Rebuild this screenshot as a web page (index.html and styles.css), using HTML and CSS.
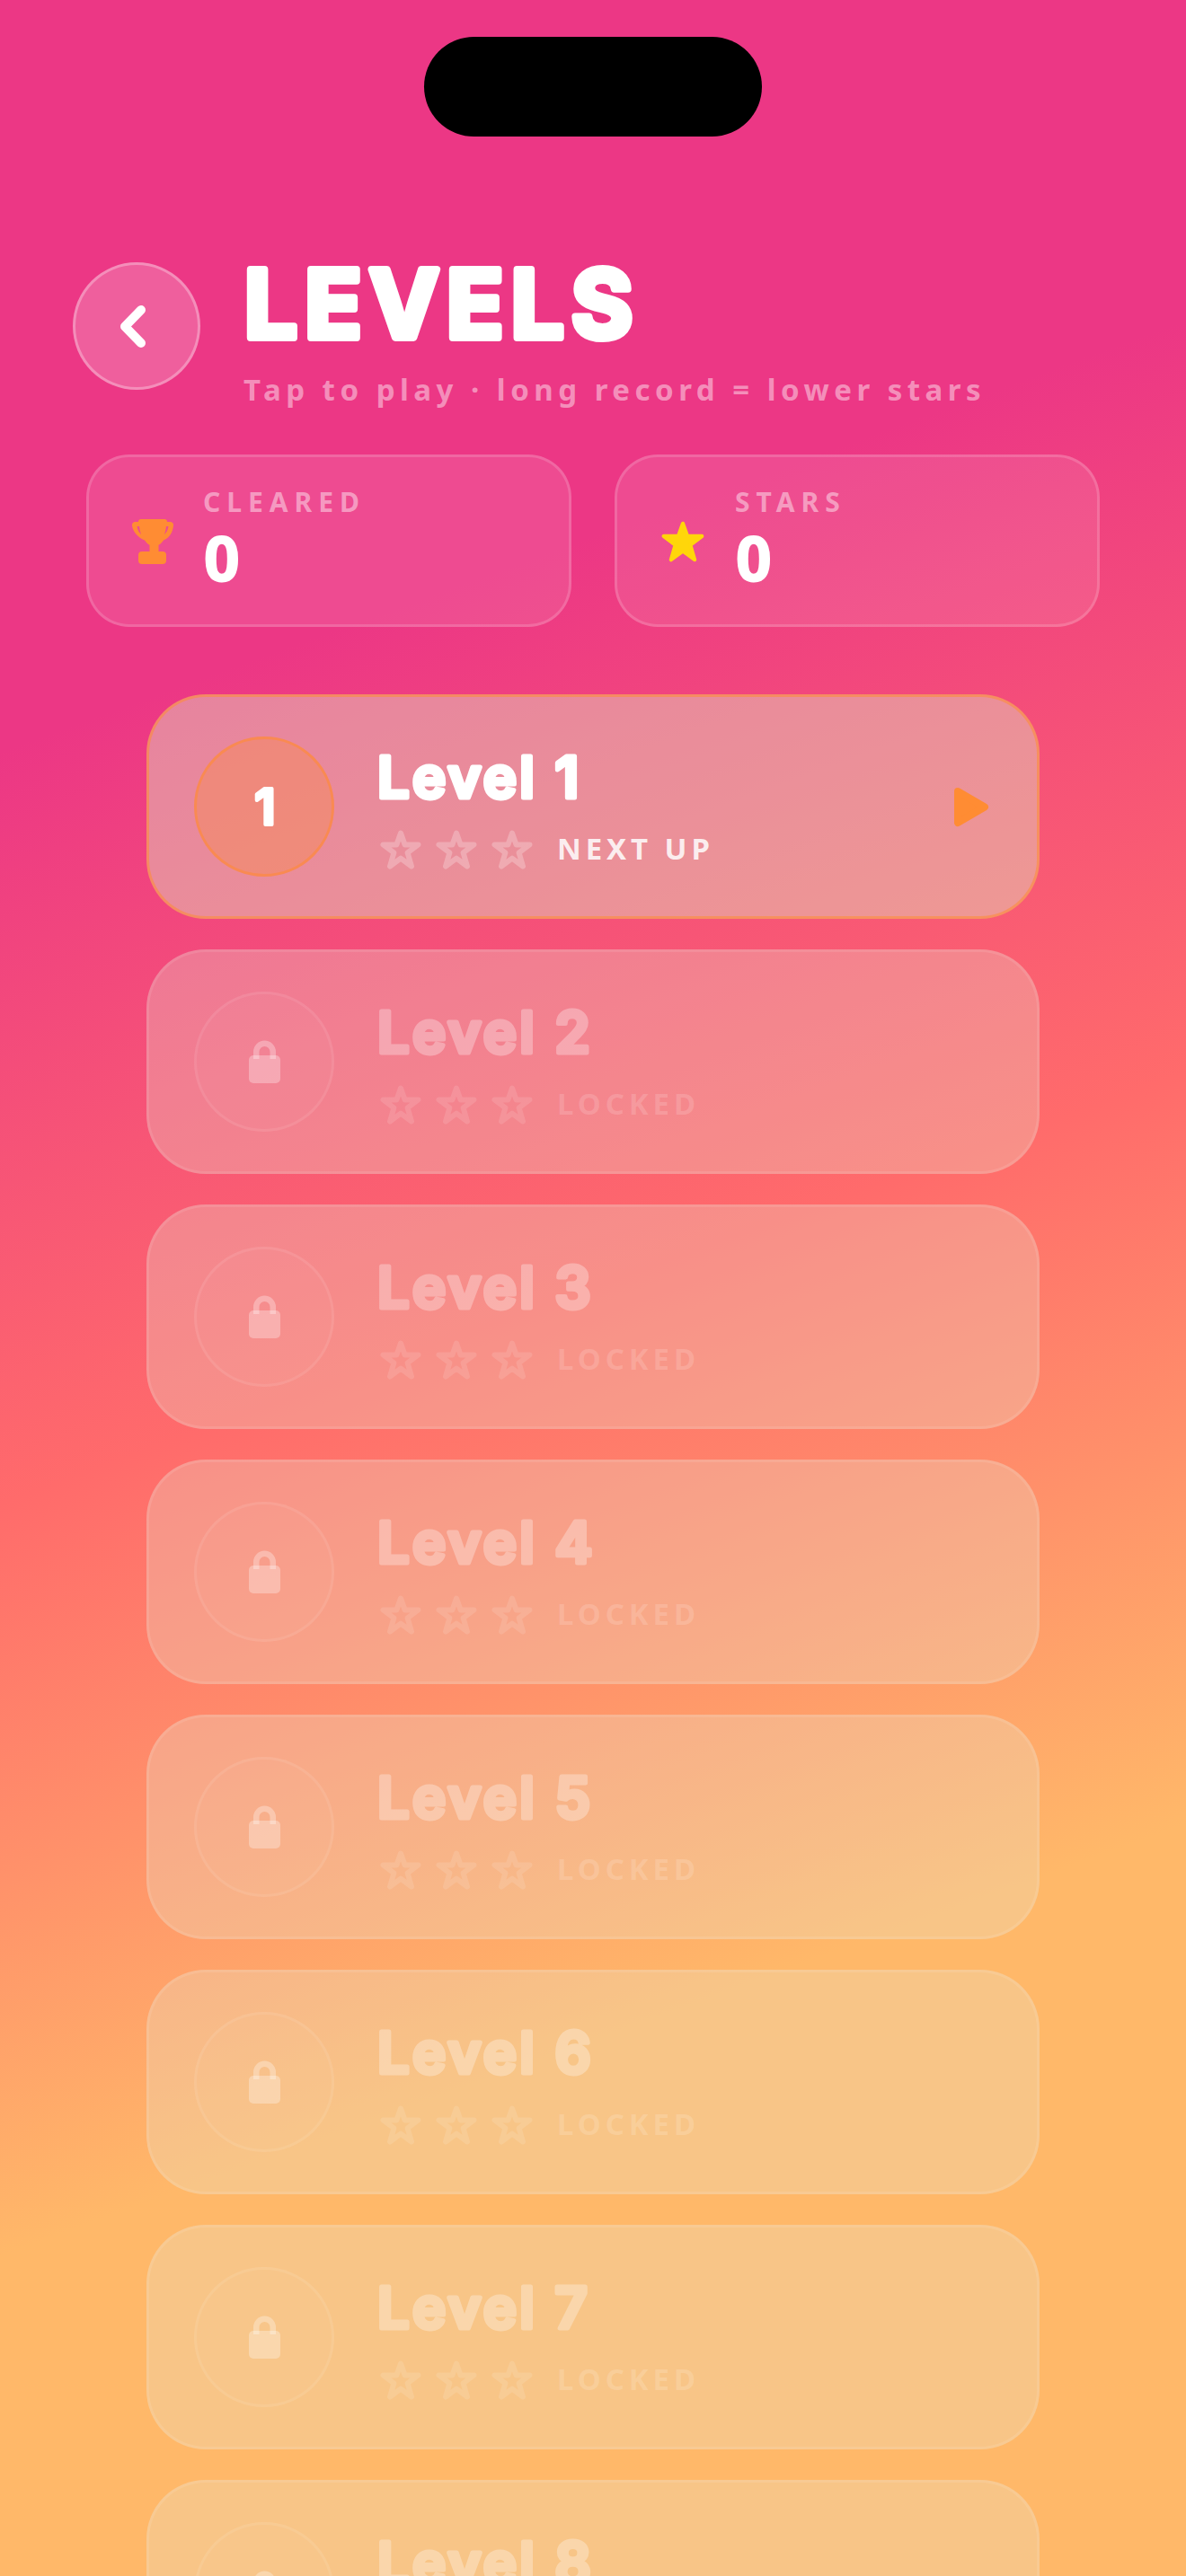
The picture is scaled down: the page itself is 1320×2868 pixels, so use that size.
FILE: index.html
```html
<!DOCTYPE html>
<html lang="en">
<head>
  <meta charset="UTF-8" />
  <meta name="viewport" content="width=device-width, initial-scale=1.0" />
  <title>Levels</title>
  <link rel="stylesheet" href="styles.css">
</head>
<body>
  <svg class="defs" width="0" height="0" aria-hidden="true">
    <symbol id="star" viewBox="0 0 46 44">
      <path d="M23 3.5 27.6 16.4 42.5 16.4 30.6 25.4 35 40.5 23 31.6 11 40.5 15.400 25.4 3.5 16.4 18.4 16.4Z" />
    </symbol>
    <symbol id="lock" viewBox="0 0 35 48">
      <path d="M5 21V13a12.500 12.500 0 0 1 25 0v8h-6.500V13a6 6 0 0 0-12 0v8Z" />
      <rect x="0" y="17" width="35" height="31" rx="5" />
    </symbol>
  </svg>

  <div class="island"></div>

  <header class="top">
    <button class="back">
      <svg viewBox="0 0 36 47" width="36" height="47"><path d="M23 5 5 23.500 23 42" /></svg>
    </button>
    <div class="heading">
      <svg class="title" width="450" height="120"><text x="1" y="104">LEVELS</text></svg>
      <p class="sub">Tap to play · long record = lower stars</p>
    </div>
  </header>

  <section class="stats">
    <div class="stat">
      <svg class="stat-icon" viewBox="0 0 46 50" width="46" height="50">
        <path class="trophy" d="M10 0h26a3 3 0 0 1 3 3h3.500a3.500 3.500 0 0 1 3.500 4c-.6 7-3.800 13.500-11 16.500-1.800 2.600-3.500 4.300-5.500 5.300V36h4.500a4 4 0 0 1 4 4v6a4 4 0 0 1-4 4H11a4 4 0 0 1-4-4v-6a4 4 0 0 1 4-4h8.500v-7.200c-2-1-3.700-2.700-5.500-5.300C6.800 20.500 .6 14 0 7a3.500 3.500 0 0 1 3.500-4H7a3 3 0 0 1 3-3Zm-4.500 8c.6 3.500 1.900 6.500 4.500 9-1-3-1.700-6-2-9Zm35 0H38c-.3 3-1 6-2 9 2.600-2.500 3.900-5.500 4.500-9Z" />
      </svg>
      <div class="stat-text">
        <div class="stat-label">CLEARED</div>
        <div class="stat-value">0</div>
      </div>
    </div>
    <div class="stat">
      <svg class="stat-icon star-gold" width="50" height="48"><use href="#star" /></svg>
      <div class="stat-text">
        <div class="stat-label">STARS</div>
        <div class="stat-value">0</div>
      </div>
    </div>
  </section>

  <main class="levels">
    <div class="level current">
      <div class="badge"><svg class="digit" width="60" height="70"><text x="31" y="55">1</text></svg></div>
      <div class="info">
        <svg class="name" width="300" height="84"><text x="-2" y="60">Level 1</text></svg>
        <div class="meta">
          <svg class="s" width="46" height="44"><use href="#star" /></svg>
          <svg class="s" width="46" height="44"><use href="#star" /></svg>
          <svg class="s" width="46" height="44"><use href="#star" /></svg>
          <span class="tag">NEXT UP</span>
        </div>
      </div>
      <svg class="play" viewBox="0 0 40 45" width="40" height="45"><path d="M5 5 35 22.500 5 40Z" /></svg>
    </div>

    <div class="level locked">
      <div class="badge"><svg width="35" height="48"><use href="#lock" /></svg></div>
      <div class="info">
        <svg class="name" width="300" height="84"><text x="-2" y="60">Level 2</text></svg>
        <div class="meta">
          <svg class="s" width="46" height="44"><use href="#star" /></svg>
          <svg class="s" width="46" height="44"><use href="#star" /></svg>
          <svg class="s" width="46" height="44"><use href="#star" /></svg>
          <span class="tag">LOCKED</span>
        </div>
      </div>
    </div>

    <div class="level locked">
      <div class="badge"><svg width="35" height="48"><use href="#lock" /></svg></div>
      <div class="info">
        <svg class="name" width="300" height="84"><text x="-2" y="60">Level 3</text></svg>
        <div class="meta">
          <svg class="s" width="46" height="44"><use href="#star" /></svg>
          <svg class="s" width="46" height="44"><use href="#star" /></svg>
          <svg class="s" width="46" height="44"><use href="#star" /></svg>
          <span class="tag">LOCKED</span>
        </div>
      </div>
    </div>

    <div class="level locked">
      <div class="badge"><svg width="35" height="48"><use href="#lock" /></svg></div>
      <div class="info">
        <svg class="name" width="300" height="84"><text x="-2" y="60">Level 4</text></svg>
        <div class="meta">
          <svg class="s" width="46" height="44"><use href="#star" /></svg>
          <svg class="s" width="46" height="44"><use href="#star" /></svg>
          <svg class="s" width="46" height="44"><use href="#star" /></svg>
          <span class="tag">LOCKED</span>
        </div>
      </div>
    </div>

    <div class="level locked">
      <div class="badge"><svg width="35" height="48"><use href="#lock" /></svg></div>
      <div class="info">
        <svg class="name" width="300" height="84"><text x="-2" y="60">Level 5</text></svg>
        <div class="meta">
          <svg class="s" width="46" height="44"><use href="#star" /></svg>
          <svg class="s" width="46" height="44"><use href="#star" /></svg>
          <svg class="s" width="46" height="44"><use href="#star" /></svg>
          <span class="tag">LOCKED</span>
        </div>
      </div>
    </div>

    <div class="level locked">
      <div class="badge"><svg width="35" height="48"><use href="#lock" /></svg></div>
      <div class="info">
        <svg class="name" width="300" height="84"><text x="-2" y="60">Level 6</text></svg>
        <div class="meta">
          <svg class="s" width="46" height="44"><use href="#star" /></svg>
          <svg class="s" width="46" height="44"><use href="#star" /></svg>
          <svg class="s" width="46" height="44"><use href="#star" /></svg>
          <span class="tag">LOCKED</span>
        </div>
      </div>
    </div>

    <div class="level locked">
      <div class="badge"><svg width="35" height="48"><use href="#lock" /></svg></div>
      <div class="info">
        <svg class="name" width="300" height="84"><text x="-2" y="60">Level 7</text></svg>
        <div class="meta">
          <svg class="s" width="46" height="44"><use href="#star" /></svg>
          <svg class="s" width="46" height="44"><use href="#star" /></svg>
          <svg class="s" width="46" height="44"><use href="#star" /></svg>
          <span class="tag">LOCKED</span>
        </div>
      </div>
    </div>

    <div class="level locked">
      <div class="badge"><svg width="35" height="48"><use href="#lock" /></svg></div>
      <div class="info">
        <svg class="name" width="300" height="84"><text x="-2" y="60">Level 8</text></svg>
        <div class="meta">
          <svg class="s" width="46" height="44"><use href="#star" /></svg>
          <svg class="s" width="46" height="44"><use href="#star" /></svg>
          <svg class="s" width="46" height="44"><use href="#star" /></svg>
          <span class="tag">LOCKED</span>
        </div>
      </div>
    </div>
  </main>
</body>
</html>
```

FILE: styles.css
```css
html, body {
  margin: 0;
  height: 2868px;
  overflow: hidden;
}
body {
  position: relative;
  font-family: "Noto Sans", sans-serif;
  color: #fff;
  background: linear-gradient(160deg, #ec3785 25%, #ff6b6b 50%, #ffb869 75%);
  padding-top: 292px;
  box-sizing: border-box;
}
.defs {
  position: absolute;
}
.island {
  position: absolute;
  top: 41px;
  left: 472px;
  width: 376px;
  height: 111px;
  border-radius: 56px;
  background: #000;
}

/* rounded display type: svg text so the outline can have round joins */
.title text,
.name text,
.digit text {
  font-family: Inter, sans-serif;
  font-weight: 600;
  fill: #fff;
  stroke: #fff;
  stroke-linejoin: round;
  stroke-linecap: round;
}
.title text {
  font-size: 104px;
  font-weight: 700;
  letter-spacing: 8.5px;
  stroke-width: 8px;
}
.name text {
  font-size: 63px;
  letter-spacing: 3.4px;
  stroke-width: 5px;
}
.digit text {
  font-size: 55px;
  stroke-width: 4px;
  text-anchor: middle;
}

.top {
  display: flex;
  align-items: center;
  gap: 48px;
  padding-left: 81px;
  height: 142px;
}
.back {
  flex: none;
  display: flex;
  align-items: center;
  justify-content: center;
  width: 142px;
  height: 142px;
  padding: 0;
  border: 3px solid rgba(255, 255, 255, 0.3);
  border-radius: 50%;
  background: rgba(255, 255, 255, 0.2);
}
.back svg {
  fill: none;
  stroke: #fff;
  stroke-width: 10;
  stroke-linecap: round;
  stroke-linejoin: round;
}
.title {
  display: block;
  overflow: visible;
}
.sub {
  margin: 21px 0 0;
  font-size: 33px;
  font-weight: 700;
  line-height: 42px;
  letter-spacing: 5.5px;
  color: rgba(255, 255, 255, 0.45);
  white-space: nowrap;
}

.stats {
  display: flex;
  gap: 48px;
  padding: 0 96px;
  margin-top: 72px;
}
.stat {
  flex: 1;
  display: flex;
  align-items: center;
  gap: 33px;
  height: 192px;
  padding-left: 48px;
  box-sizing: border-box;
  border: 3px solid rgba(255, 255, 255, 0.16);
  border-radius: 48px;
  background: rgba(255, 255, 255, 0.1);
}
.stat-icon {
  flex: none;
  margin-top: 2px;
}
.trophy {
  fill: #ff8c33;
}
.star-gold {
  fill: #ffd60a;
  stroke: #ffd60a;
  stroke-width: 4;
  stroke-linejoin: round;
  overflow: visible;
}
.stat-text {
  padding-bottom: 7px;
}
.stat-label {
  margin-bottom: 7px;
  font-size: 30px;
  font-weight: 700;
  line-height: 36px;
  letter-spacing: 7px;
  color: rgba(255, 255, 255, 0.45);
}
.stat-value {
  font-size: 72px;
  font-weight: 800;
  line-height: 72px;
}

.levels {
  display: flex;
  flex-direction: column;
  gap: 34px;
  margin: 75px 163px 0;
}
.level {
  flex: none;
  display: flex;
  align-items: center;
  gap: 50px;
  height: 250px;
  padding: 0 53px 0 50px;
  box-sizing: border-box;
  border: 3px solid rgba(255, 255, 255, 0.1);
  border-radius: 66px;
  background: rgba(232, 228, 205, 0.3);
}
.level.current {
  border-color: rgba(255, 140, 51, 0.55);
  background: rgba(224, 227, 190, 0.45);
}
.badge {
  flex: none;
  display: flex;
  align-items: center;
  justify-content: center;
  width: 156px;
  height: 156px;
  box-sizing: border-box;
  border: 3px solid rgba(255, 255, 255, 0.08);
  border-radius: 50%;
  background: rgba(255, 255, 255, 0.03);
}
.locked .badge svg {
  fill: rgba(255, 255, 255, 0.3);
}
.current .badge {
  border-color: #f98a52;
  background: rgba(255, 140, 51, 0.3);
}
.info {
  flex: 1;
}
.name {
  display: block;
  margin-bottom: 12px;
  overflow: visible;
}
.locked .name {
  opacity: 0.3;
}
.meta {
  display: flex;
  align-items: center;
  gap: 16px;
  height: 44px;
  padding-left: 1px;
}
.s {
  fill: none;
  stroke: rgba(255, 255, 255, 0.25);
  stroke-width: 6;
  stroke-linejoin: round;
  overflow: visible;
}
.locked .s {
  stroke: rgba(255, 255, 255, 0.12);
}
.tag {
  margin: 0 0 3px 11px;
  font-size: 33px;
  font-weight: 700;
  line-height: 44px;
  letter-spacing: 4.9px;
  color: rgba(255, 255, 255, 0.85);
}
.locked .tag {
  color: rgba(255, 255, 255, 0.16);
}
.play {
  flex: none;
  fill: #ff8c33;
  stroke: #ff8c33;
  stroke-width: 8;
  stroke-linejoin: round;
}
```
